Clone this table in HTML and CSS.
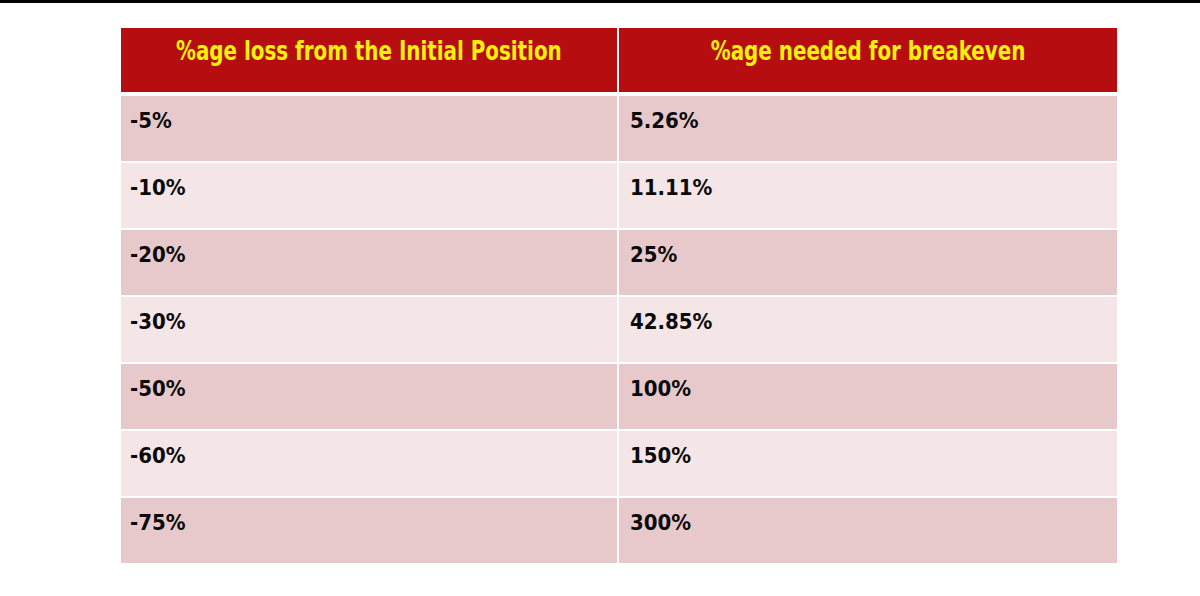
FILE: index.html
```html
<!DOCTYPE html>
<html>
<head>
<meta charset="utf-8">
<link rel="stylesheet" href="styles.css">
</head>
<body>
<div class="topbar"></div>
<div class="table">
  <div class="cell head"><span class="condensed">%age loss from the Initial Position</span></div>
  <div class="cell head"><span class="condensed">%age needed for breakeven</span></div>
  <div class="cell dark">-5%</div><div class="cell dark right">5.26%</div>
  <div class="cell light">-10%</div><div class="cell light right">11.11%</div>
  <div class="cell dark">-20%</div><div class="cell dark right">25%</div>
  <div class="cell light">-30%</div><div class="cell light right">42.85%</div>
  <div class="cell dark">-50%</div><div class="cell dark right">100%</div>
  <div class="cell light">-60%</div><div class="cell light right">150%</div>
  <div class="cell dark">-75%</div><div class="cell dark right">300%</div>
</div>
</body>
</html>
```

FILE: styles.css
```css
html, body {
  margin: 0;
  padding: 0;
  background: #ffffff;
  width: 1200px;
  height: 596px;
  overflow: hidden;
}
.topbar {
  height: 3px;
  background: #000000;
}
.table {
  margin: 25px 0 0 121px;
  width: 996px;
  display: grid;
  grid-template-columns: 496px 498px;
  grid-template-rows: 66px repeat(7, 65px);
  column-gap: 2px;
  row-gap: 2px;
  font-family: "DejaVu Sans Condensed", "DejaVu Sans", sans-serif;
  font-weight: bold;
}
.cell {
  font-size: 22px;
  line-height: 26px;
  padding: 12px 0 0 9px;
  color: #0a0a0a;
}
.cell.right {
  padding-left: 11px;
}
.head {
  background: #b50d10;
  color: #f7f00a;
  text-align: center;
  padding: 8px 0 0 0;
  font-size: 26px;
  line-height: 30px;
  margin-bottom: 2px;
}
.condensed {
  display: inline-block;
  transform: scaleX(0.85);
  transform-origin: center;
  white-space: nowrap;
}
.dark {
  background: #e8c9cb;
}
.light {
  background: #f4e5e6;
}
```
